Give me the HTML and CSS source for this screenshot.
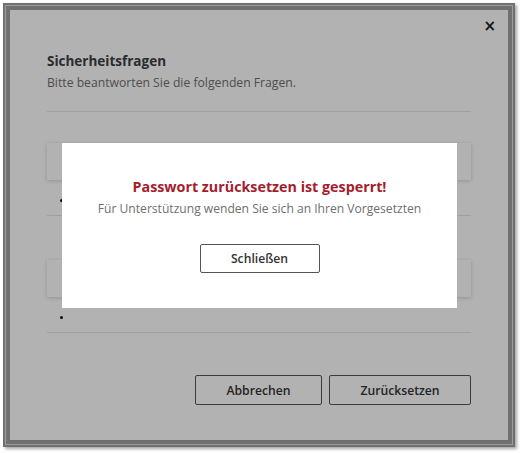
FILE: index.html
```html
<!DOCTYPE html>
<html lang="de">
<head>
    <meta charset="UTF-8">
    <title>Sicherheitsfragen</title>
    <link rel="stylesheet" href="styles.css">
</head>
<body>
    <div class="frame">
        <div class="frame-inner">
            <div class="dialog">
                <button class="close-btn">&times;</button>
                <h2 class="dialog-title">Sicherheitsfragen</h2>
                <p class="dialog-sub">Bitte beantworten Sie die folgenden Fragen.</p>
                <hr class="divider">

                <div class="question">
                    <div class="question-card"></div>
                    <ul class="answers"><li></li></ul>
                </div>
                <div class="question">
                    <div class="question-card"></div>
                    <ul class="answers"><li></li></ul>
                </div>

                <div class="actions">
                    <button class="btn">Abbrechen</button>
                    <button class="btn btn-wide">Zurücksetzen</button>
                </div>
            </div>
            <div class="overlay"></div>

            <div class="alert">
                <h3 class="alert-title">Passwort zurücksetzen ist gesperrt!</h3>
                <p class="alert-text">Für Unterstützung wenden Sie sich an Ihren Vorgesetzten</p>
                <button class="btn alert-btn">Schließen</button>
            </div>
        </div>
    </div>
</body>
</html>
```

FILE: styles.css
```css
* {
    margin: 0;
    padding: 0;
    box-sizing: border-box;
}

body {
    font-family: "Open Sans", "Liberation Sans", sans-serif;
    background: #fff;
    color: #3c4045;
    width: 520px;
    height: 453px;
}

.frame {
    margin: 3px 0 0 3px;
    width: 512px;
    height: 444px;
    border: 2px solid #707070;
    padding: 1px;
    background: #9c9c9c;
    box-shadow: 2px 2px 3px rgba(0, 0, 0, 0.35);
}

.frame-inner {
    position: relative;
    height: 100%;
    border: 4px solid #707070;
    background: #fff;
}

.dialog {
    padding: 41px 37px 0 37px;
}

.close-btn {
    position: absolute;
    top: 7px;
    right: 12px;
    border: none;
    background: none;
    font-family: "DejaVu Sans", sans-serif;
    font-size: 15px;
    font-weight: bold;
    color: #222;
}

.dialog-title {
    font-size: 13.5px;
    font-weight: 700;
    line-height: 20px;
}

.dialog-sub {
    font-size: 12.2px;
    line-height: 18px;
    margin-top: 3px;
    color: #707070;
}

.divider {
    border: none;
    border-top: 1px solid #e4e4e4;
    margin-top: 19px;
}

.question {
    margin-top: 31px;
    border-bottom: 1px solid #e4e4e4;
}

.question + .question {
    margin-top: 44px;
}

.question-card {
    height: 37px;
    background: #fff;
    box-shadow: 0 1px 4px rgba(0, 0, 0, 0.18);
}

.answers {
    padding: 19px 0 13px 13px;
    list-style: none;
}

.answers li {
    width: 3px;
    height: 3px;
    border-radius: 50%;
    background: #111;
}

.actions {
    display: flex;
    justify-content: flex-end;
    gap: 7px;
    margin-top: 42px;
}

.btn {
    font-family: inherit;
    font-size: 12.2px;
    font-weight: 600;
    color: #333;
    background: #fff;
    border: 1px solid #555;
    border-radius: 2px;
    height: 30px;
    width: 127px;
}

.btn-wide {
    width: 142px;
}

.overlay {
    position: absolute;
    inset: 0;
    background: rgba(0, 0, 0, 0.3);
}

.alert {
    position: absolute;
    top: 133px;
    left: 52px;
    width: 395px;
    height: 165px;
    background: #fff;
    display: flex;
    flex-direction: column;
    align-items: center;
    padding-top: 34px;
}

.alert-title {
    color: #a51d2d;
    font-size: 14.3px;
    font-weight: 700;
    line-height: 20px;
}

.alert-text {
    color: #6f6f6f;
    font-size: 12.1px;
    line-height: 18px;
    margin-top: 3px;
}

.alert-btn {
    margin-top: 26px;
    width: 120px;
    height: 29px;
}
```
